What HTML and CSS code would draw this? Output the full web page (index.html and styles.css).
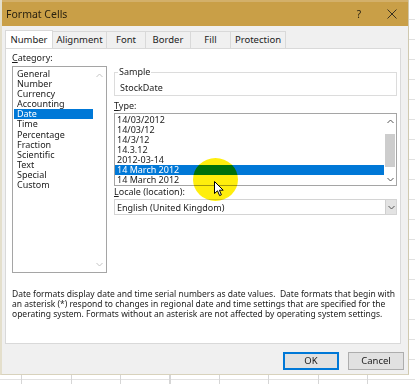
FILE: index.html
```html
<!DOCTYPE html>
<html>
<head>
<meta charset="utf-8">
<link rel="stylesheet" href="styles.css">
</head>
<body>
<div class="screen">
  <div class="dialog">
    <div class="titlebar">
      <span class="title">Format Cells</span>
      <span class="help">?</span>
      <svg class="close" width="10" height="10" viewBox="0 0 10 10"><path d="M0.5 0.5 L9.5 9.5 M9.5 0.5 L0.5 9.5" stroke="#3a3220" stroke-width="1" fill="none"/></svg>
    </div>
    <div class="tabs">
      <div class="tab active w1">Number</div>
      <div class="tab w2">Alignment</div>
      <div class="tab w3">Font</div>
      <div class="tab w4">Border</div>
      <div class="tab w5">Fill</div>
      <div class="tab w6">Protection</div>
    </div>
    <div class="panel">
      <div class="cols">
        <div class="left">
          <div class="label"><u>C</u>ategory:</div>
          <div class="listbox cat">
            <div class="items">
              <div class="item">General</div>
              <div class="item">Number</div>
              <div class="item">Currency</div>
              <div class="item">Accounting</div>
              <div class="item sel">Date</div>
              <div class="item">Time</div>
              <div class="item">Percentage</div>
              <div class="item">Fraction</div>
              <div class="item">Scientific</div>
              <div class="item">Text</div>
              <div class="item">Special</div>
              <div class="item">Custom</div>
            </div>
            <div class="vscroll light">
              <svg width="7" height="5" viewBox="0 0 7 5"><path d="M0.5 4 L3.5 1 L6.5 4" stroke="#c4c4c4" fill="none"/></svg>
              <svg width="7" height="5" viewBox="0 0 7 5"><path d="M0.5 1 L3.5 4 L6.5 1" stroke="#c4c4c4" fill="none"/></svg>
            </div>
          </div>
        </div>
        <div class="right">
          <div class="sample">
            <span class="legend">Sample</span>
            <div class="sample-val">StockDate</div>
          </div>
          <div class="label"><u>T</u>ype:</div>
          <div class="listbox type">
            <div class="items">
              <div class="item">14/03/2012</div>
              <div class="item">14/03/12</div>
              <div class="item">14/3/12</div>
              <div class="item">14.3.12</div>
              <div class="item">2012-03-14</div>
              <div class="item sel">14 March 2012</div>
              <div class="item">14 March 2012</div>
            </div>
            <div class="vscroll">
              <svg width="7" height="5" viewBox="0 0 7 5"><path d="M0.5 4 L3.5 1 L6.5 4" stroke="#555" fill="none"/></svg>
              <div class="thumb"></div>
              <svg width="7" height="5" viewBox="0 0 7 5"><path d="M0.5 1 L3.5 4 L6.5 1" stroke="#555" fill="none"/></svg>
            </div>
          </div>
          <div class="label"><u>L</u>ocale (location):</div>
          <div class="select">
            <span class="select-text">English (United Kingdom)</span>
            <span class="drop"><svg width="7" height="5" viewBox="0 0 7 5"><path d="M0.5 1 L3.5 4 L6.5 1" stroke="#555" fill="none"/></svg></span>
          </div>
        </div>
      </div>
      <p class="desc">Date formats display date and time serial numbers as date values.&nbsp; Date formats that begin with an asterisk (*) respond to changes in regional date and time settings that are specified for the operating system. Formats without an asterisk are not affected by operating system settings.</p>
    </div>
    <div class="footer">
      <div class="btn default">OK</div>
      <div class="btn">Cancel</div>
    </div>
  </div>
  <div class="highlight"></div>
  <svg class="cursor" width="10" height="16" viewBox="0 0 10 16"><path d="M0.5 0.5 L0.5 12.5 L3.5 9.8 L5.6 14.6 L7.4 13.8 L5.4 9.2 L9.2 9.2 Z" fill="#fff" stroke="#000" stroke-width="1" stroke-linejoin="round"/></svg>
</div>
</body>
</html>
```
FILE: styles.css
```css
* { box-sizing: border-box; }
html, body { margin: 0; padding: 0; }
body {
  font-family: "Noto Sans", "Open Sans", sans-serif;
  font-size: 9px;
  color: #1b1b1b;
}
.screen {
  position: relative;
  width: 415px;
  height: 384px;
  overflow: hidden;
  background-color: #fff;
  background-image:
    repeating-linear-gradient(to right, transparent 0 21px, #d6d6d6 21px 22px, transparent 22px 49.5px),
    repeating-linear-gradient(to bottom, transparent 0 19px, #e2e2e2 19px 20px);
  background-position: 0 0, 0 0;
}
.dialog {
  width: 409px;
  height: 375px;
  background: #f0f0f0;
  border-right: 1px solid #cfc8ae;
  border-bottom: 1px solid #d8d2bc;
  border-left: 2px solid #e4dfcc;
  display: flex;
  flex-direction: column;
}
.titlebar {
  height: 26px;
  background: #c99f47;
  display: flex;
  align-items: center;
  padding-left: 4px;
  color: #2a2210;
  font-size: 10.5px;
  border-top: 2px solid #d3b06a;
}
.title { flex: 1; }
.help { font-size: 10px; margin-right: 26px; }
.close { margin-right: 11px; }
.tabs {
  display: flex;
  margin-top: 5px;
  padding-left: 3px;
  height: 17px;
  position: relative;
  z-index: 1;
}
.tab {
  border: 1px solid #d9d9d9;
  border-bottom: none;
  margin-left: -1px;
  text-align: center;
  line-height: 16px;
  background: #f0f0f0;
  font-size: 9.5px;
  color: #222;
}
.tab.active {
  background: #fff;
  height: 18px;
  margin-top: -1px;
  line-height: 18px;
}
.w1 { width: 48px; margin-left: 0; }
.w2 { width: 55px; }
.w3 { width: 40px; }
.w4 { width: 46px; }
.w5 { width: 41px; }
.w6 { width: 56px; }
.panel {
  margin-left: 3px;
  width: 396px;
  height: 296px;
  background: #fff;
  border: 1px solid #d9d9d9;
  padding: 3px 0 0 6px;
}
.cols {
  display: flex;
  gap: 7px;
}
.left { width: 95px; }
.right { width: 283px; }
.label { line-height: 12px; height: 12px; margin-bottom: 2px; }
.right .label { margin-bottom: 1px; }
.listbox {
  border: 1px solid #a5a5a5;
  display: flex;
  background: #fff;
}
.listbox .items { flex: 1; }
.cat { height: 207px; }
.cat .items { padding: 2px 0 0 1px; }
.cat .item { line-height: 10.1px; height: 10.1px; padding-left: 3px; width: 79px; }
.item.sel { background: #0078d7; color: #fff; }
.vscroll {
  width: 11px;
  display: flex;
  flex-direction: column;
  align-items: center;
  justify-content: space-between;
  padding: 6px 0 6px;
}
.vscroll.light { width: 14px; padding: 6px 0 5px; }
.sample {
  margin-top: 20px;
  height: 24px;
  border: 1px solid #dcdcdc;
  position: relative;
  margin-bottom: 4px;
}
.legend {
  position: absolute;
  left: 3px;
  top: -7px;
  background: #fff;
  padding: 0 1px;
  line-height: 12px;
}
.sample-val { padding: 9px 0 0 5px; line-height: 12px; }
.type { height: 73px; }
.type .items { padding-top: 1px; }
.type .item { line-height: 10px; height: 10px; padding-left: 2px; }
.type .vscroll { width: 12px; padding: 5px 0 3px; background: #fff; }
.thumb { width: 10px; height: 33px; background: #cdcdcd; margin: 2px 0; }
.right .label:nth-of-type(2) { margin-top: 2px; }
.select {
  height: 16px;
  border: 1px solid #d4d4d4;
  display: flex;
  align-items: center;
}
.select-text { flex: 1; padding-left: 2px; }
.drop {
  width: 11px;
  height: 14px;
  background: #e3e3e3;
  border-left: 1px solid #cfcfcf;
  display: flex;
  align-items: center;
  justify-content: center;
}
.desc {
  margin: 16px 0 0 0;
  line-height: 10.2px;
  width: 385px;
  font-size: 8.5px;
}
.footer {
  display: flex;
  justify-content: flex-end;
  gap: 9px;
  padding-right: 4px;
  margin-top: 8px;
}
.btn {
  width: 56px;
  height: 18px;
  background: #e1e1e1;
  border: 1px solid #adadad;
  text-align: center;
  line-height: 16px;
  font-size: 9.5px;
}
.btn.default { border: 2px solid #0078d7; line-height: 14px; }
.highlight {
  position: absolute;
  left: 193px;
  top: 158px;
  width: 45px;
  height: 43px;
  border-radius: 50%;
  background: #ffee00;
  mix-blend-mode: multiply;
  opacity: 0.95;
}
.cursor {
  position: absolute;
  left: 214px;
  top: 181px;
}
```
